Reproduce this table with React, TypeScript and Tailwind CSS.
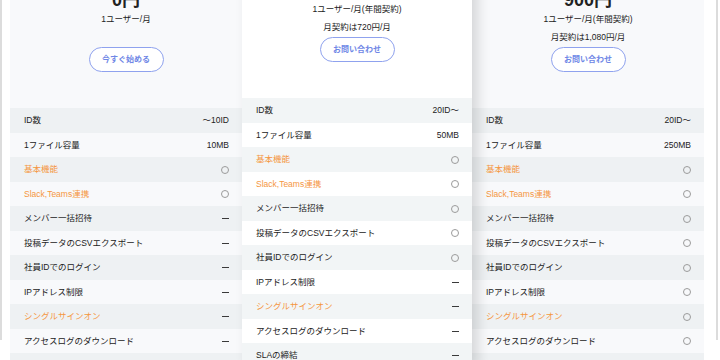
import React from "react";

interface Feature {
  label: string;
  orange?: boolean;
}

interface Plan {
  price: string;
  unit: string;
  note: string;
  button: string;
  featured?: boolean;
  values: string[];
}

const features: Feature[] = [
  { label: "ID数" },
  { label: "1ファイル容量" },
  { label: "基本機能", orange: true },
  { label: "Slack,Teams連携", orange: true },
  { label: "メンバー一括招待" },
  { label: "投稿データのCSVエクスポート" },
  { label: "社員IDでのログイン" },
  { label: "IPアドレス制限" },
  { label: "シングルサインオン", orange: true },
  { label: "アクセスログのダウンロード" },
  { label: "SLAの締結" },
];

// "o" = included, "-" = not included, anything else is shown as text
const plans: Plan[] = [
  {
    price: "0円",
    unit: "1ユーザー/月",
    note: "",
    button: "今すぐ始める",
    values: ["〜10ID", "10MB", "o", "o", "-", "-", "-", "-", "-", "-", "-"],
  },
  {
    price: "600円",
    unit: "1ユーザー/月(年間契約)",
    note: "月契約は720円/月",
    button: "お問い合わせ",
    featured: true,
    values: ["20ID〜", "50MB", "o", "o", "o", "o", "o", "-", "-", "-", "-"],
  },
  {
    price: "900円",
    unit: "1ユーザー/月(年間契約)",
    note: "月契約は1,080円/月",
    button: "お問い合わせ",
    values: ["20ID〜", "250MB", "o", "o", "o", "o", "o", "o", "o", "o", "o"],
  },
];

const Mark = ({ value }: { value: string }) => {
  if (value === "o")
    return <span className="block w-[8px] h-[8px] rounded-full border border-[#9b9b9b]" />;
  if (value === "-") return <span className="block w-[7px] h-px bg-[#3a3a3a]" />;
  return <span className="text-[#222]">{value}</span>;
};

const PlanCard = ({ plan }: { plan: Plan }) => {
  const featured = plan.featured;
  return (
    <div
      className={
        featured
          ? "relative z-10 -mt-[10px] w-[230px] shrink-0 bg-white pt-[10px] shadow-[6px_0_12px_rgba(0,0,0,0.14)]"
          : "w-[232px] shrink-0 bg-[#f8f9fb] pt-[10px]"
      }
    >
      <div className="flex flex-col items-center">
        <div className="text-[18px] font-bold leading-[20px] text-[#222]">{plan.price}</div>
        <div className="text-[8.5px] leading-[18px] text-[#222]">{plan.unit}</div>
        <div className="h-[18px] text-[8.5px] leading-[18px] text-[#222]">{plan.note}</div>
        <button className="mt-px h-[25px] w-[75px] rounded-full border-[1.5px] border-[#8fa2ee] bg-white text-[8px] font-bold text-[#6f87e6]">
          {plan.button}
        </button>
      </div>
      <div className="mt-[36px]">
        {features.map((f, i) => (
          <div
            key={f.label}
            className={
              "flex h-[24.5px] items-center justify-between pl-[14px] pr-[13px] pt-px text-[8.5px] " +
              (i % 2 === 0
                ? featured
                  ? "bg-[#f2f5f6]"
                  : "bg-[#eef1f3]"
                : featured
                ? "bg-white"
                : "bg-[#f8f9fb]")
            }
          >
            <span className={f.orange ? "text-[#f5963f]" : "text-[#222]"}>{f.label}</span>
            <Mark value={plan.values[i]} />
          </div>
        ))}
      </div>
    </div>
  );
};

export default function App() {
  return (
    <div className="h-[360px] w-[720px] overflow-hidden bg-white font-['Liberation_Sans','Noto_Sans_CJK_JP',sans-serif]">
      <div className="h-full w-[718px] border-x-2 border-[#dcdcdc] pl-[8px]">
        <div className="-mt-[20px] flex items-start">
          {plans.map((p) => (
            <PlanCard key={p.price} plan={p} />
          ))}
        </div>
      </div>
    </div>
  );
}
